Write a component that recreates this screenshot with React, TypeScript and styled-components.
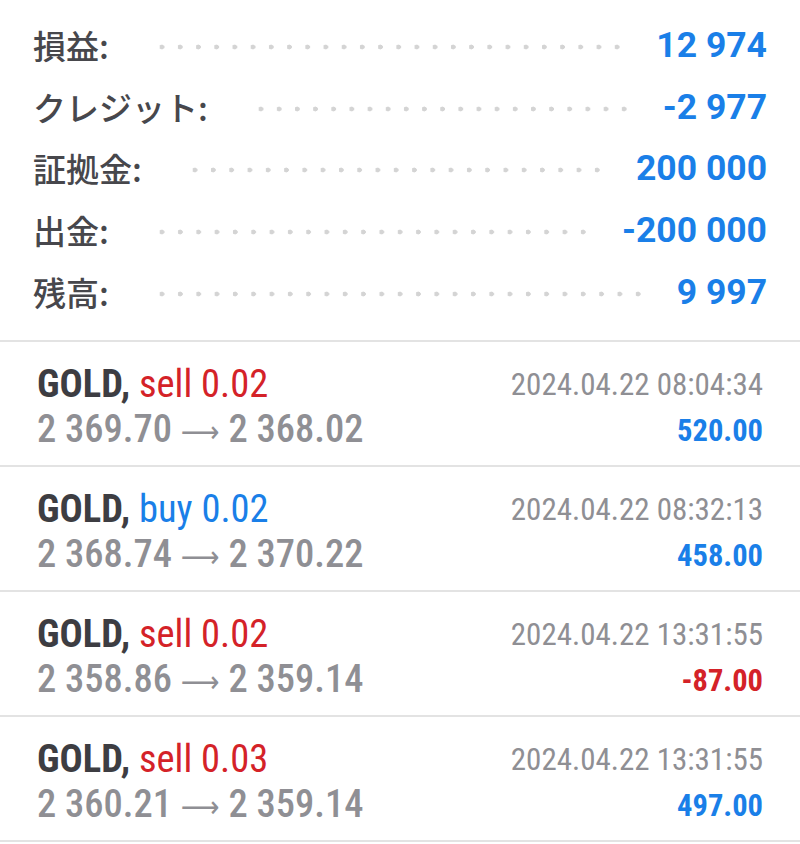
import styled, { createGlobalStyle } from 'styled-components'

const GlobalStyle = createGlobalStyle`
  html, body {
    margin: 0;
    padding: 0;
    background: #ffffff;
  }
`

const Page = styled.div`
  width: 800px;
  background: #ffffff;
  font-family: Roboto, "Noto Sans CJK JP", sans-serif;
`

const Summary = styled.section`
  display: flex;
  flex-direction: column;
  padding: 14px 33px 17px 33px;
  border-bottom: 2px solid #e3e3e3;
`

const SummaryRow = styled.div`
  display: flex;
  align-items: center;
  height: 61.75px;
`

const Label = styled.span`
  font-family: "Noto Sans CJK JP", sans-serif;
  font-size: 33px;
  font-weight: 500;
  color: #47474c;
  white-space: nowrap;
`

const Dots = styled.span`
  flex: 1;
  height: 6px;
  margin: 4px 30px 0 44px;
  background-image: radial-gradient(circle, #d4d4d4 2.2px, transparent 2.7px);
  background-size: 17.8px 6px;
  background-repeat: space;
`

const Value = styled.span`
  font-family: Roboto, sans-serif;
  font-size: 35.5px;
  font-weight: 700;
  color: #1a7fe8;
  white-space: nowrap;
`

const Trade = styled.div`
  display: flex;
  justify-content: space-between;
  padding: 19px 37px 0 37px;
  height: 104px;
  border-bottom: 2px solid #e3e3e3;
  font-family: "Roboto Condensed", Roboto, sans-serif;
  font-stretch: condensed;
`

const Column = styled.div<{ $right?: boolean }>`
  display: flex;
  flex-direction: column;
  align-items: ${p => (p.$right ? 'flex-end' : 'flex-start')};
`

const Title = styled.div`
  font-size: 38.5px;
  line-height: 45px;
  white-space: nowrap;
`

const Symbol = styled.span`
  font-weight: 700;
  color: #3d3d42;
`

const Side = styled.span<{ $buy: boolean }>`
  font-weight: 400;
  color: ${p => (p.$buy ? '#1a7fe8' : '#d42228')};
`

const Prices = styled.div`
  font-size: 38.5px;
  font-weight: 500;
  line-height: 45px;
  color: #8f8f94;
  white-space: nowrap;
`

const Arrow = styled.span`
  font-family: "DejaVu Sans", sans-serif;
  font-weight: 400;
  font-size: 30px;
`

const Time = styled.div`
  font-size: 31px;
  line-height: 48px;
  color: #8f8f94;
  white-space: nowrap;
`

const Profit = styled.div<{ $loss: boolean }>`
  font-size: 30.5px;
  font-weight: 700;
  line-height: 44px;
  color: ${p => (p.$loss ? '#d42228' : '#1a7fe8')};
`

const summary = [
  ['損益:', '12 974'],
  ['クレジット:', '-2 977'],
  ['証拠金:', '200 000'],
  ['出金:', '-200 000'],
  ['残高:', '9 997'],
]

const trades = [
  { side: 'sell', vol: '0.02', open: '2 369.70', close: '2 368.02', time: '2024.04.22 08:04:34', profit: '520.00' },
  { side: 'buy', vol: '0.02', open: '2 368.74', close: '2 370.22', time: '2024.04.22 08:32:13', profit: '458.00' },
  { side: 'sell', vol: '0.02', open: '2 358.86', close: '2 359.14', time: '2024.04.22 13:31:55', profit: '-87.00' },
  { side: 'sell', vol: '0.03', open: '2 360.21', close: '2 359.14', time: '2024.04.22 13:31:55', profit: '497.00' },
]

const App = () => {
  return (
    <Page>
      <GlobalStyle />
      <Summary>
        {summary.map(([label, value]) => (
          <SummaryRow key={label}>
            <Label>{label}</Label>
            <Dots />
            <Value>{value}</Value>
          </SummaryRow>
        ))}
      </Summary>

      {trades.map((t, i) => (
        <Trade key={i}>
          <Column>
            <Title>
              <Symbol>GOLD,</Symbol> <Side $buy={t.side === 'buy'}>{t.side} {t.vol}</Side>
            </Title>
            <Prices>
              {t.open} <Arrow>⟶</Arrow> {t.close}
            </Prices>
          </Column>
          <Column $right>
            <Time>{t.time}</Time>
            <Profit $loss={t.profit.startsWith('-')}>{t.profit}</Profit>
          </Column>
        </Trade>
      ))}
    </Page>
  )
}

export default App
